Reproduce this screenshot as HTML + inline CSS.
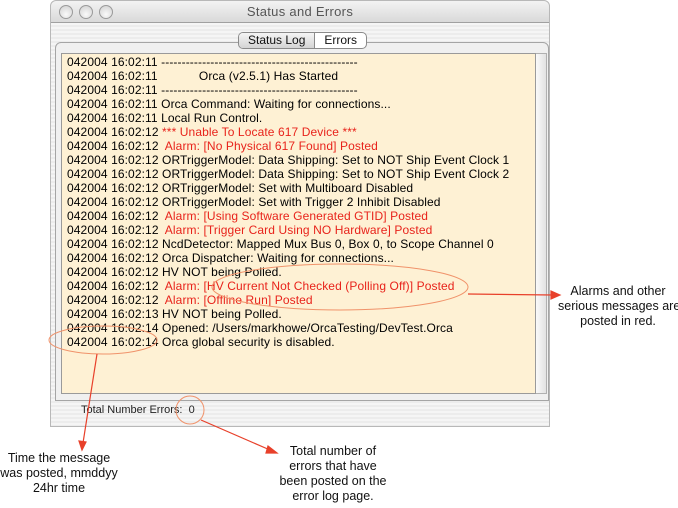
<!DOCTYPE html>
<html><head><meta charset="utf-8">
<style>
*{margin:0;padding:0;box-sizing:border-box}
body{width:678px;height:508px;background:#fff;position:relative;overflow:hidden;font-family:"Liberation Sans",sans-serif}
.win{position:absolute;left:50px;top:0;width:500px;height:427px;background:repeating-linear-gradient(#ececec 0,#ececec 2px,#f5f5f5 2px,#f5f5f5 4px);border:1px solid #b8b8b8;border-radius:6px 6px 0 0}
.title{position:absolute;left:0;top:0;width:498px;height:22px;background:linear-gradient(#f3f3f3,#d9d9d9);border-bottom:1px solid #a0a0a0;border-radius:6px 6px 0 0;text-align:center;font-size:13px;line-height:22px;color:#555;letter-spacing:.3px}
.btn{position:absolute;top:4px;width:14px;height:14px;border-radius:50%;background:radial-gradient(circle at 50% 70%,#fafafa,#cfcfcf);border:1px solid #9a9a9a}
.panel{position:absolute;left:4px;top:41px;width:494px;height:359px;border:1px solid #a5a5a5;border-radius:6px 6px 0 0;background:#f0f0f0}
.tabs{position:absolute;left:187px;top:31px;height:17px;border:1px solid #8a8a8a;border-radius:5px;background:#fff;font-size:12px;display:flex;overflow:hidden;z-index:3}
.tabs div{padding:0 9px;line-height:15px;color:#111}
.tabs .sel{background:linear-gradient(#f4f4f4,#d4d4d4);border-right:1px solid #8a8a8a}
.log{position:absolute;left:10px;top:52px;width:475px;height:341px;background:#fef1d4;border:1px solid #9a9a9a}
.sb{position:absolute;left:485px;top:52px;width:11px;height:341px;background:linear-gradient(90deg,#fafafa,#e2e2e2);border:1px solid #b0b0b0;border-left:none}
.lines{position:absolute;left:16px;top:54px;font-size:12px;letter-spacing:0.1px;line-height:14px;color:#000;white-space:pre}
.r{color:#e8231b}
.tot{position:absolute;left:30px;top:403px;font-size:11px;color:#222}
.note{position:absolute;font-family:"Liberation Sans",sans-serif;font-size:12.5px;line-height:15px;text-align:center;color:#111;white-space:nowrap}
</style></head><body>
<div class="win">
 <div class="title">Status and Errors</div>
 <div class="btn" style="left:8px"></div><div class="btn" style="left:28px"></div><div class="btn" style="left:48px"></div>
 <div class="panel"></div>
 <div class="tabs"><div class="sel">Status Log</div><div>Errors</div></div>
 <div class="log"></div>
 <div class="sb"></div>
 <div class="lines">042004 16:02:11 ------------------------------------------------
042004 16:02:11            Orca (v2.5.1) Has Started
042004 16:02:11 ------------------------------------------------
042004 16:02:11 Orca Command: Waiting for connections...
042004 16:02:11 Local Run Control.
042004 16:02:12 <span class="r">*** Unable To Locate 617 Device ***</span>
042004 16:02:12  <span class="r">Alarm: [No Physical 617 Found] Posted</span>
042004 16:02:12 ORTriggerModel: Data Shipping: Set to NOT Ship Event Clock 1
042004 16:02:12 ORTriggerModel: Data Shipping: Set to NOT Ship Event Clock 2
042004 16:02:12 ORTriggerModel: Set with Multiboard Disabled
042004 16:02:12 ORTriggerModel: Set with Trigger 2 Inhibit Disabled
042004 16:02:12  <span class="r">Alarm: [Using Software Generated GTID] Posted</span>
042004 16:02:12  <span class="r">Alarm: [Trigger Card Using NO Hardware] Posted</span>
042004 16:02:12 NcdDetector: Mapped Mux Bus 0, Box 0, to Scope Channel 0
042004 16:02:12 Orca Dispatcher: Waiting for connections...
042004 16:02:12 HV NOT being Polled.
042004 16:02:12  <span class="r">Alarm: [HV Current Not Checked (Polling Off)] Posted</span>
042004 16:02:12  <span class="r">Alarm: [Offline Run] Posted</span>
042004 16:02:13 HV NOT being Polled.
042004 16:02:14 Opened: /Users/markhowe/OrcaTesting/DevTest.Orca
042004 16:02:14 Orca global security is disabled.</div>
 <div class="tot">Total Number Errors:&nbsp; 0</div>
</div>
<svg width="678" height="508" style="position:absolute;left:0;top:0">
 <g fill="none" stroke="#f0926a" stroke-width="1">
  <ellipse cx="340" cy="287" rx="128" ry="23"/>
  <ellipse cx="103" cy="340" rx="54" ry="14"/>
  <circle cx="190" cy="410" r="14"/>
 </g>
 <g stroke="#e8402a" stroke-width="1.2" fill="#e8402a">
  <line x1="468" y1="294" x2="553" y2="295"/>
  <polygon points="560,295 551,291 551,299"/>
  <line x1="97" y1="354" x2="83" y2="443"/>
  <polygon points="82,450 79,441 86,442"/>
  <line x1="201" y1="420" x2="270" y2="450"/>
  <polygon points="277,453 268,446 266,453"/>
 </g>
</svg>
<div class="note" style="left:558px;top:284px;width:120px">Alarms and other<br>serious messages are<br>posted in red.</div>
<div class="note" style="left:0;top:451px;width:118px">Time the message<br>was posted, mmddyy<br>24hr time</div>
<div class="note" style="left:268px;top:444px;width:130px">Total number of<br>errors that have<br>been posted on the<br>error log page.</div>
</body></html>
